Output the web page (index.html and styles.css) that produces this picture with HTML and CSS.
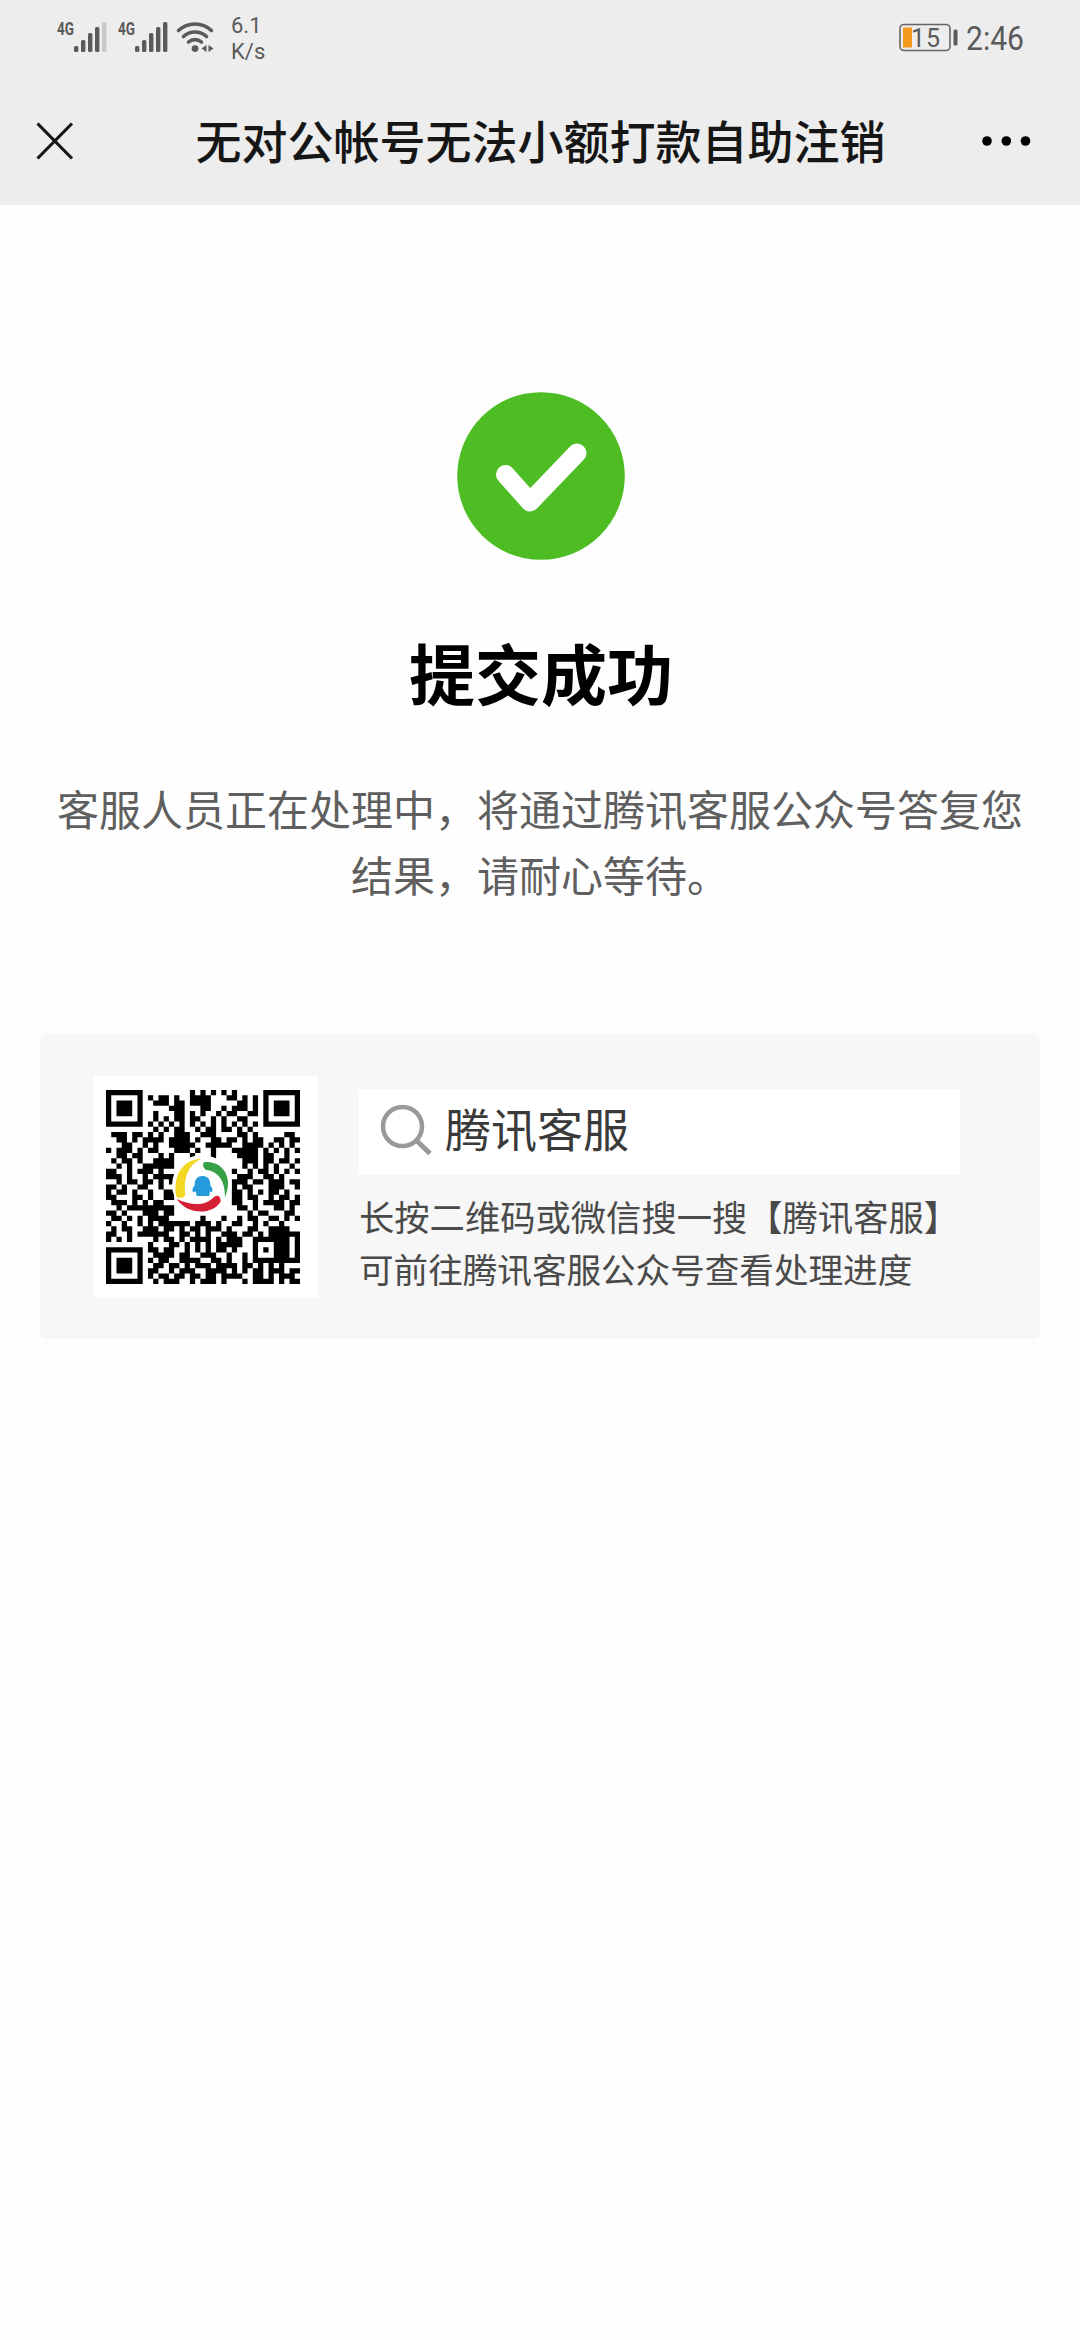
FILE: index.html
```html
<!DOCTYPE html>
<html lang="zh-CN">
  <head>
    <meta charset="UTF-8" />
    <meta name="viewport" content="width=device-width, initial-scale=1.0" />
    <title>无对公帐号无法小额打款自助注销</title>
    <link rel="stylesheet" href="styles.css">
  </head>
  <body>
    <header>
      <div class="status-bar">
        <svg class="signals" width="164" height="40" viewBox="0 0 164 40">
          <g fill="#5a5a5a">
            <text class="net" x="1" y="21" textLength="17" lengthAdjust="spacingAndGlyphs">4G</text>
            <rect x="18" y="32" width="4.4" height="6" rx="1.5" />
            <rect x="25" y="26" width="4.4" height="12" rx="1.5" />
            <rect x="32" y="19" width="4.4" height="19" rx="1.5" />
            <rect x="39" y="13" width="4.4" height="25" rx="1.5" />
            <rect x="46" y="8" width="4.4" height="30" rx="1.5" fill="#c9c9c9" />
            <text class="net" x="62" y="21" textLength="17" lengthAdjust="spacingAndGlyphs">4G</text>
            <rect x="79" y="32" width="4.4" height="6" rx="1.5" />
            <rect x="86" y="26" width="4.4" height="12" rx="1.5" />
            <rect x="93" y="19" width="4.4" height="19" rx="1.5" />
            <rect x="100" y="13" width="4.4" height="25" rx="1.5" />
            <rect x="107" y="8" width="4.4" height="30" rx="1.5" />
            <circle cx="139" cy="34.6" r="3.4" />
            <path d="M150.500 31v7l-5-3.500zM152.500 31v7l5-3.500z" />
          </g>
          <g fill="none" stroke="#5a5a5a" stroke-width="3.6" stroke-linecap="round">
            <path d="M122.500 16.500a24 24 0 0 1 33 0" />
            <path d="M127.500 22.500a17 17 0 0 1 23 0" />
            <path d="M132.500 28a10 10 0 0 1 13 0" />
          </g>
        </svg>
        <div class="speed">6.1<br>K/s</div>
        <svg class="battery" width="60" height="30" viewBox="0 0 60 30">
          <rect x="1" y="1.500" width="50" height="26" rx="4" fill="none" stroke="#666" stroke-width="1.600" />
          <rect x="4" y="4.500" width="9" height="20" fill="#f6991f" />
          <text x="12" y="23.500" font-size="25" textLength="29">15</text>
          <rect x="54.500" y="6.500" width="4" height="16" rx="1.500" fill="#5a5a5a" />
        </svg>
        <svg class="clock" width="80" height="48" viewBox="0 0 80 48">
          <text x="0" y="36" font-size="34" textLength="58" lengthAdjust="spacingAndGlyphs">2:46</text>
        </svg>
      </div>
      <div class="nav-bar">
        <svg width="42" height="42" viewBox="0 0 42 42">
          <path d="M3.500 3.500l34.500 35M38 3.500l-34.500 35" stroke="#161616" stroke-width="3.200" />
        </svg>
        <h1>无对公帐号无法小额打款自助注销</h1>
        <svg width="54" height="12" viewBox="0 0 54 12">
          <circle cx="6" cy="6" r="4.800" />
          <circle cx="25.300" cy="6" r="4.800" />
          <circle cx="44.500" cy="6" r="4.800" />
        </svg>
      </div>
    </header>

    <main>
      <svg class="success" width="168" height="168" viewBox="0 0 168 168">
        <circle cx="84" cy="84" r="83.800" fill="#4ebd23" />
        <path d="M48.500 82.500L73 110L120 61" fill="none" stroke="#fff" stroke-width="19" stroke-linecap="round" stroke-linejoin="round" />
      </svg>
      <h2>提交成功</h2>
      <p class="message">客服人员正在处理中&#65292;将通过腾讯客服公众号答复您<br>结果&#65292;请耐心等待。</p>

      <div class="card">
        <div class="qr">
          <svg width="194" height="194" viewBox="0 0 37 37">
            <path id="qr-modules" />
            <circle cx="18.300" cy="18.100" r="5.700" fill="#fff" />
            <g class="logo">
              <path d="M18.200 13.100C14.500 13.200 12.700 16.500 13.400 20.300Q14.400 21 15.100 20.100C14.700 16.500 15.800 14.200 18.200 13.100z" fill="#f2d822" />
              <path d="M18.700 13.800C21.500 13.300 24.600 16 22.700 20.500C22.700 17.300 21.600 15.600 19 15.200Q18.200 14.500 18.700 13.800z" fill="#35a045" />
              <path d="M13.500 20.800C15.600 24 20.500 23.800 21.900 21.200Q21.700 19.700 20.600 20.400C18.800 22.200 16.400 22.100 13.500 20.800z" fill="#d51f35" />
              <path d="M18.400 16.400C17.200 16.400 16.900 17.300 16.900 18.200C16.400 18.800 16.400 19.300 16.700 19.500L17.100 19.300L17.300 20.200H19.700L19.800 19.300L20.200 19.500C20.400 19 20.300 18.700 19.900 18.200C19.900 17.100 19.500 16.400 18.400 16.400z" fill="#259bdc" />
            </g>
          </svg>
        </div>
        <div class="info">
          <div class="search">
            <svg width="54" height="54" viewBox="0 0 54 54">
              <circle cx="22.500" cy="22.500" r="19.500" fill="none" stroke="#999" stroke-width="4.500" />
              <path d="M37 37l13 12.500" stroke="#999" stroke-width="5" />
            </svg>
            <span>腾讯客服</span>
          </div>
          <p class="hint">长按二维码或微信搜一搜【腾讯客服】</p>
          <p class="hint second">可前往腾讯客服公众号查看处理进度</p>
        </div>
      </div>
    </main>

    <script>
      const rows = [
        "#######.........#.#.#.#.#.....#######",
        "#.....#.#.##.#..####...##.#.#.#.....#",
        "#.###.#..###.##.####.....##.#.#.###.#",
        "#.###.#.....###...##..#.###.#.#.###.#",
        "#.###.#..#...##.#.#..#.##..##.#.###.#",
        "#.....#..#.#.##.##..#.#..##...#.....#",
        "#######.#.#.#.#.#.#.#.#.#.#.#.#######",
        ".........#.#.##..#.##.##.#.#.........",
        ".###.##.#.#..###..###....##.#.....##.",
        "..##.#.####.####.#..##.##.#.##..##.##",
        "...##..#.#..#####..#####..####.#.#.#.",
        "#.###.#.##...###.#..#...#####.#.#.#.#",
        "..##.##...#.#...#...#....####.##..#..",
        ".#.##.#..####.............###.##.##.#",
        "..#.#..######.............#.#.#.#..#.",
        "##..#.###.#.............#..#.##.#.#.#",
        "###.#..#.####............###..##.#...",
        "..#.##.##.#.#...........###.##.###.##",
        "##.#..##..#.............#.##...###..#",
        "#.##.#..#..##...........##.#.#.##.#..",
        "##...##.#..##...........##.##..#.##.#",
        ".###.#.#.##.............##..#.####.##",
        "..#.#########............##.#...##.#.",
        "##.#...###.##..............#.##...##.",
        ".##.#.#.####......#...#..#.##..##.#.#",
        "#..#..#.#.######.###.#..##..#.#..#...",
        ".#.##..###.##.#.##.###.#...##..####..",
        "##..#.######..##.#.#..###.##.#.######",
        "#.#.#....#.##.#.####.#.###..#######.#",
        "........#...##.#.#.#.#####..#...###.#",
        "#######.##.##..#.#.#.##.#...#.#.###.#",
        "#.....#..####.##..###..#..#.#...###.#",
        "#.###.#.#.##..####..##.#..#.#########",
        "#.###.#..##.##.#.###.####.##.#.#.#...",
        "#.###.#.##..#.###..####.#.#.##.###.##",
        "#.....#.#.##.##.##.##.####..##.#.###.",
        "#######..#.###..#.###.#...#.####.#.##"
      ];

      let d = "";
      rows.forEach((row, y) => {
        for (const run of row.matchAll(/#+/g)) {
          d += `M${run.index} ${y}h${run[0].length}v1h-${run[0].length}z`;
        }
      });
      document.getElementById("qr-modules").setAttribute("d", d);
    </script>
  </body>
</html>
```
FILE: styles.css
```css
body {
  margin: 0;
  min-height: 100vh;
  background-color: #fefefe;
  font-family: "Noto Sans CJK SC", sans-serif;
}

h1, h2, p {
  margin: 0;
}

svg {
  display: block;
  flex-shrink: 0;
}

header {
  height: 205px;
  background-color: #ededed;
}

.status-bar {
  display: flex;
  height: 76px;
  padding: 0 34px 0 56px;
  box-sizing: border-box;
}

.status-bar text, .speed {
  font-family: Roboto, sans-serif;
  fill: #5a5a5a;
  color: #5a5a5a;
}

.status-bar .net {
  font-size: 19px;
  font-weight: bold;
}

.signals {
  margin-top: 14px;
}

.speed {
  margin: 13px 0 0 11px;
  font-size: 22px;
  line-height: 26px;
}

.battery {
  margin: 23px 7px 0 auto;
}

.clock {
  margin-top: 14px;
}

.nav-bar {
  display: flex;
  align-items: center;
  justify-content: space-between;
  height: 129px;
  padding: 0 45px 0 34px;
  box-sizing: border-box;
}

h1 {
  font-size: 46px;
  font-weight: 500;
  line-height: 60px;
  margin-top: -4px;
  margin-left: 24px;
  color: #161616;
}

main {
  display: flex;
  flex-direction: column;
  align-items: center;
  padding-top: 187px;
}

.success {
  margin-left: 1px;
}

h2 {
  margin-top: 61px;
  margin-left: 2px;
  font-size: 66px;
  font-weight: bold;
  line-height: 100px;
  color: #000;
}

.message {
  margin-top: 54px;
  font-size: 42px;
  line-height: 66px;
  text-align: center;
  white-space: nowrap;
  color: #5f5f5f;
}

.card {
  display: flex;
  width: 1000px;
  height: 306px;
  margin-top: 126px;
  padding: 43px 54px 0;
  box-sizing: border-box;
  border-radius: 6px;
  background-color: #f7f7f7;
}

.qr {
  width: 224px;
  height: 222px;
  padding: 14px 12px;
  box-sizing: border-box;
  background-color: #fff;
}

.info {
  margin: 13px 0 0 41px;
}

.search {
  display: flex;
  align-items: center;
  gap: 11px;
  width: 601px;
  height: 86px;
  margin-bottom: 14px;
  padding-left: 21px;
  box-sizing: border-box;
  background-color: #fff;
}

.search svg {
  margin-top: -2px;
}

.search span {
  font-size: 46px;
  line-height: 60px;
  margin-top: -10px;
  color: #3a3a3a;
}

.hint {
  font-size: 35.3px;
  line-height: 53px;
  white-space: nowrap;
  color: #4a4a4a;
}

.hint.second {
  font-size: 34.6px;
}
```
